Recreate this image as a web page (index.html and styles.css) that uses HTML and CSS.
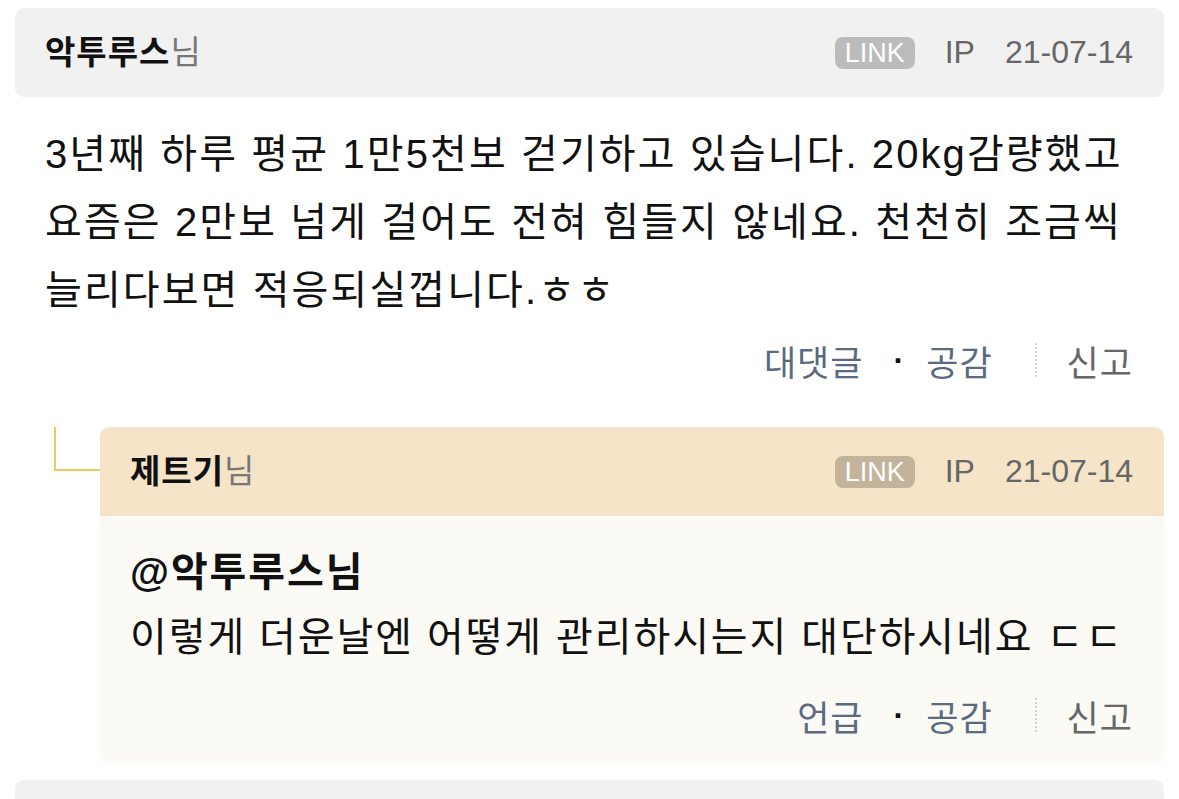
FILE: index.html
```html
<!DOCTYPE html>
<html lang="ko">
<head>
<meta charset="utf-8">
<title>댓글</title>
<link rel="stylesheet" href="styles.css">
</head>
<body>
<div class="thread">
  <div class="comment">
    <div class="c-head">
      <div class="c-name"><b>악투루스</b><span class="nim">님</span></div>
      <div class="c-meta">
        <span class="badge">LINK</span>
        <span class="ip">IP</span>
        <span class="date">21-07-14</span>
      </div>
    </div>
    <p class="c-text">3년째 하루 평균 1만5천보 걷기하고 있습니다. 20kg감량했고 요즘은 2만보 넘게 걸어도 전혀 힘들지 않네요. 천천히 조금씩 늘리다보면 적응되실껍니다.ㅎㅎ</p>
    <div class="c-actions">
      <a class="act">대댓글</a>
      <span class="dot">·</span>
      <a class="act">공감</a>
      <span class="sep"></span>
      <a class="act report">신고</a>
    </div>
  </div>

  <div class="reply">
    <span class="connector"></span>
    <div class="r-card">
      <div class="c-head r-head">
        <div class="c-name"><b>제트기</b><span class="nim">님</span></div>
        <div class="c-meta">
          <span class="badge r-badge">LINK</span>
          <span class="ip">IP</span>
          <span class="date">21-07-14</span>
        </div>
      </div>
      <div class="r-body">
        <p class="r-text"><strong class="mention">@악투루스님</strong><br>이렇게 더운날엔 어떻게 관리하시는지 대단하시네요 ㄷㄷ</p>
        <div class="c-actions r-actions">
          <a class="act">언급</a>
          <span class="dot">·</span>
          <a class="act">공감</a>
          <span class="sep"></span>
          <a class="act report">신고</a>
        </div>
      </div>
    </div>
  </div>

  <div class="comment next">
    <div class="c-head"></div>
  </div>
</div>
</body>
</html>
```

FILE: styles.css
```css
* { box-sizing: border-box; }
html, body { margin: 0; padding: 0; background: #ffffff; }
body {
  font-family: "Liberation Sans", "Noto Sans CJK KR", sans-serif;
  color: #111111;
  overflow: hidden;
  word-break: keep-all;
}
.thread { padding: 8px 15px 0 15px; }

.c-head {
  display: flex;
  align-items: center;
  justify-content: space-between;
  height: 89px;
  padding: 0 31px 0 30px;
  background: #f1f1f1;
  border-radius: 9px;
}
.c-name { font-size: 33px; line-height: 40px; letter-spacing: 1px; }
.c-name b { font-weight: 700; color: #111; }
.nim { color: #777777; font-weight: 400; }

.c-meta { display: flex; align-items: center; color: #666666; font-size: 32px; }
.badge {
  display: inline-block;
  height: 32px;
  line-height: 33px;
  padding: 0 10px;
  border-radius: 8px;
  background: #bbbbbb;
  color: #ffffff;
  font-size: 27px;
}
.r-badge { background: #c3b39b; }
.ip { margin-left: 30px; }
.date { margin-left: 30px; }

.c-text {
  margin: 23px 30px 0 30px;
  font-size: 40px;
  line-height: 68px;
  letter-spacing: 2.1px;
}

.c-actions {
  display: flex;
  justify-content: flex-end;
  align-items: center;
  height: 40px;
  margin-top: 16px;
  padding-right: 31px;
  font-family: "Noto Sans CJK KR", sans-serif;
  font-size: 35px;
  letter-spacing: 1px;
}
.act { color: #5a6a80; text-decoration: none; }
.act.report { color: #666666; }
.dot { color: #111; margin: 0 21px 0 30px; font-family: "Liberation Sans", sans-serif; font-weight: 700; font-size: 32px; }
.sep {
  display: inline-block;
  width: 0;
  height: 34px;
  border-left: 2px dotted #d0d0d0;
  margin: 0 30px 0 42px;
}

.reply { display: flex; margin-top: 47px; }
.connector {
  flex: none;
  width: 46px;
  height: 44px;
  margin-left: 39px;
  border-left: 2px solid #efc75e;
  border-bottom: 2px solid #efc75e;
}
.r-card {
  flex: 1;
  background: #fbfaf5;
  border-radius: 9px;
  overflow: hidden;
}
.r-head { background: #f5e4c7; border-radius: 9px 9px 0 0; }
.r-body { padding: 24px 31px 28px 30px; }
.r-text {
  margin: 0;
  font-size: 40px;
  line-height: 65px;
  letter-spacing: 1.9px;
}
.mention { font-weight: 600; }
.r-actions { margin-top: 25px; padding-right: 0; }

.next { margin-top: 17px; }
```
